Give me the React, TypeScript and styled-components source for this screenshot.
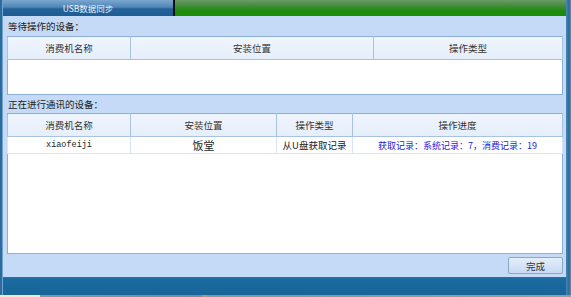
import React from "react";
import styled, { createGlobalStyle } from "styled-components";

const Global = createGlobalStyle`
  html, body { margin: 0; padding: 0; }
  body { width: 571px; height: 297px; overflow: hidden; background: #1a6699;
    font-family: "Noto Sans CJK SC", "DejaVu Sans", sans-serif; }
`;

const Frame = styled.div`
  width: 571px;
  height: 297px;
  display: flex;
  flex-direction: column;
`;

const Body = styled.div`
  flex: 1;
  display: flex;
`;

const LeftEdge = styled.div`
  width: 3px;
  background: linear-gradient(to right, #2d6b9c 0, #2d6b9c 2px, #6ea3cf 2px);
`;

const RightEdge = styled.div`
  width: 5px;
  background: linear-gradient(to right, #4a86b6, #2b6a9c 60%, #5f8fb2);
`;

const Main = styled.div`
  flex: 1;
  display: flex;
  flex-direction: column;
`;

const TabBar = styled.div`
  height: 16px;
  display: flex;
`;

const Tab = styled.div`
  width: 170px;
  background: linear-gradient(to bottom, #7aa7cd 0%, #4f86b6 45%, #236399 55%, #1d5d93 100%);
  color: #f2f6fb;
  font-size: 8.5px;
  line-height: 16px;
  text-align: center;
`;

const TabSep = styled.div`
  width: 2px;
  background: #101010;
`;

const TabFill = styled.div`
  flex: 1;
  background: linear-gradient(to bottom, #6c9a6a 0%, #3f8c34 40%, #1c8a0c 70%, #1a8d0a 100%);
`;

const Panel = styled.div`
  height: 261px;
  background: #c4daf6;
  padding: 0 3px 0 4px;
  display: flex;
  flex-direction: column;
`;

const SectionLabel = styled.div<{ $h: number }>`
  height: ${(p) => p.$h}px;
  line-height: ${(p) => p.$h}px;
  font-size: 9.5px;
  color: #222;
  padding-left: 1px;
`;

const Grid = styled.table<{ $h: number }>`
  width: 556px;
  height: ${(p) => p.$h}px;
  border-collapse: collapse;
  table-layout: fixed;
  background: #ffffff;
  border: 1px solid #8eafd6;
`;

const Th = styled.th`
  height: 22px;
  background: linear-gradient(to bottom, #f0f5fd, #e5eefa);
  border: 1px solid #a8c2e2;
  border-top-color: #8eafd6;
  font-weight: normal;
  font-size: 9.5px;
  color: #333;
  padding: 0;
`;

const Td = styled.td<{ $blue?: boolean; $mono?: boolean; $big?: boolean }>`
  height: 15px;
  border: 1px solid #d9e5f3;
  padding: 0;
  text-align: center;
  font-size: ${(p) => (p.$big ? "11px" : p.$mono ? "8.5px" : p.$blue ? "9px" : "9.5px")};
  font-family: ${(p) => (p.$mono ? `"Liberation Mono", monospace` : "inherit")};
  color: ${(p) => (p.$blue ? "#2222dd" : "#222")};
  white-space: nowrap;
`;

const Filler = styled.td`
  padding: 0;
  border: none;
`;

const Footer = styled.div`
  flex: 1;
  display: flex;
  justify-content: flex-end;
  align-items: flex-start;
  padding-top: 3px;
`;

const Button = styled.button`
  width: 55px;
  height: 17px;
  margin: 0;
  border: 1px solid #8aa8c8;
  border-radius: 2px;
  background: linear-gradient(to bottom, #e4eefb, #c7daf2);
  font-family: inherit;
  font-size: 9.5px;
  color: #333;
  padding: 0;
`;

const BottomBar = styled.div`
  height: 18px;
  background: linear-gradient(to bottom, #2a72a6 0, #1b6aa0 2px, #176598 100%);
`;

const Strip = styled.div`
  height: 2px;
  background: linear-gradient(to right, #f2ecc8 0, #f2ecc8 40px, #7b98a8 40px, #6f8f9f 200px, #b29c70 205px, #7d99a7 210px, #8aa0a8 100%);
`;

export default function App() {
  return (
    <>
      <Global />
      <Frame>
        <Body>
          <LeftEdge />
          <Main>
            <TabBar>
              <Tab>USB数据同步</Tab>
              <TabSep />
              <TabFill />
            </TabBar>
            <Panel>
              <SectionLabel $h={20}>等待操作的设备：</SectionLabel>
              <Grid $h={59}>
                <colgroup>
                  <col style={{ width: 123 }} />
                  <col style={{ width: 243 }} />
                  <col />
                </colgroup>
                <thead>
                  <tr>
                    <Th>消费机名称</Th>
                    <Th>安装位置</Th>
                    <Th>操作类型</Th>
                  </tr>
                </thead>
                <tbody>
                  <tr>
                    <Filler colSpan={3} />
                  </tr>
                </tbody>
              </Grid>
              <SectionLabel $h={18}>正在进行通讯的设备：</SectionLabel>
              <Grid $h={141}>
                <colgroup>
                  <col style={{ width: 123 }} />
                  <col style={{ width: 146 }} />
                  <col style={{ width: 76 }} />
                  <col />
                </colgroup>
                <thead>
                  <tr>
                    <Th>消费机名称</Th>
                    <Th>安装位置</Th>
                    <Th>操作类型</Th>
                    <Th>操作进度</Th>
                  </tr>
                </thead>
                <tbody>
                  <tr>
                    <Td $mono>xiaofeiji</Td>
                    <Td $big>饭堂</Td>
                    <Td>从U盘获取记录</Td>
                    <Td $blue>获取记录：系统记录：7，消费记录：19</Td>
                  </tr>
                  <tr>
                    <Filler colSpan={4} />
                  </tr>
                </tbody>
              </Grid>
              <Footer>
                <Button>完成</Button>
              </Footer>
            </Panel>
            <BottomBar />
          </Main>
          <RightEdge />
        </Body>
        <Strip />
      </Frame>
    </>
  );
}
